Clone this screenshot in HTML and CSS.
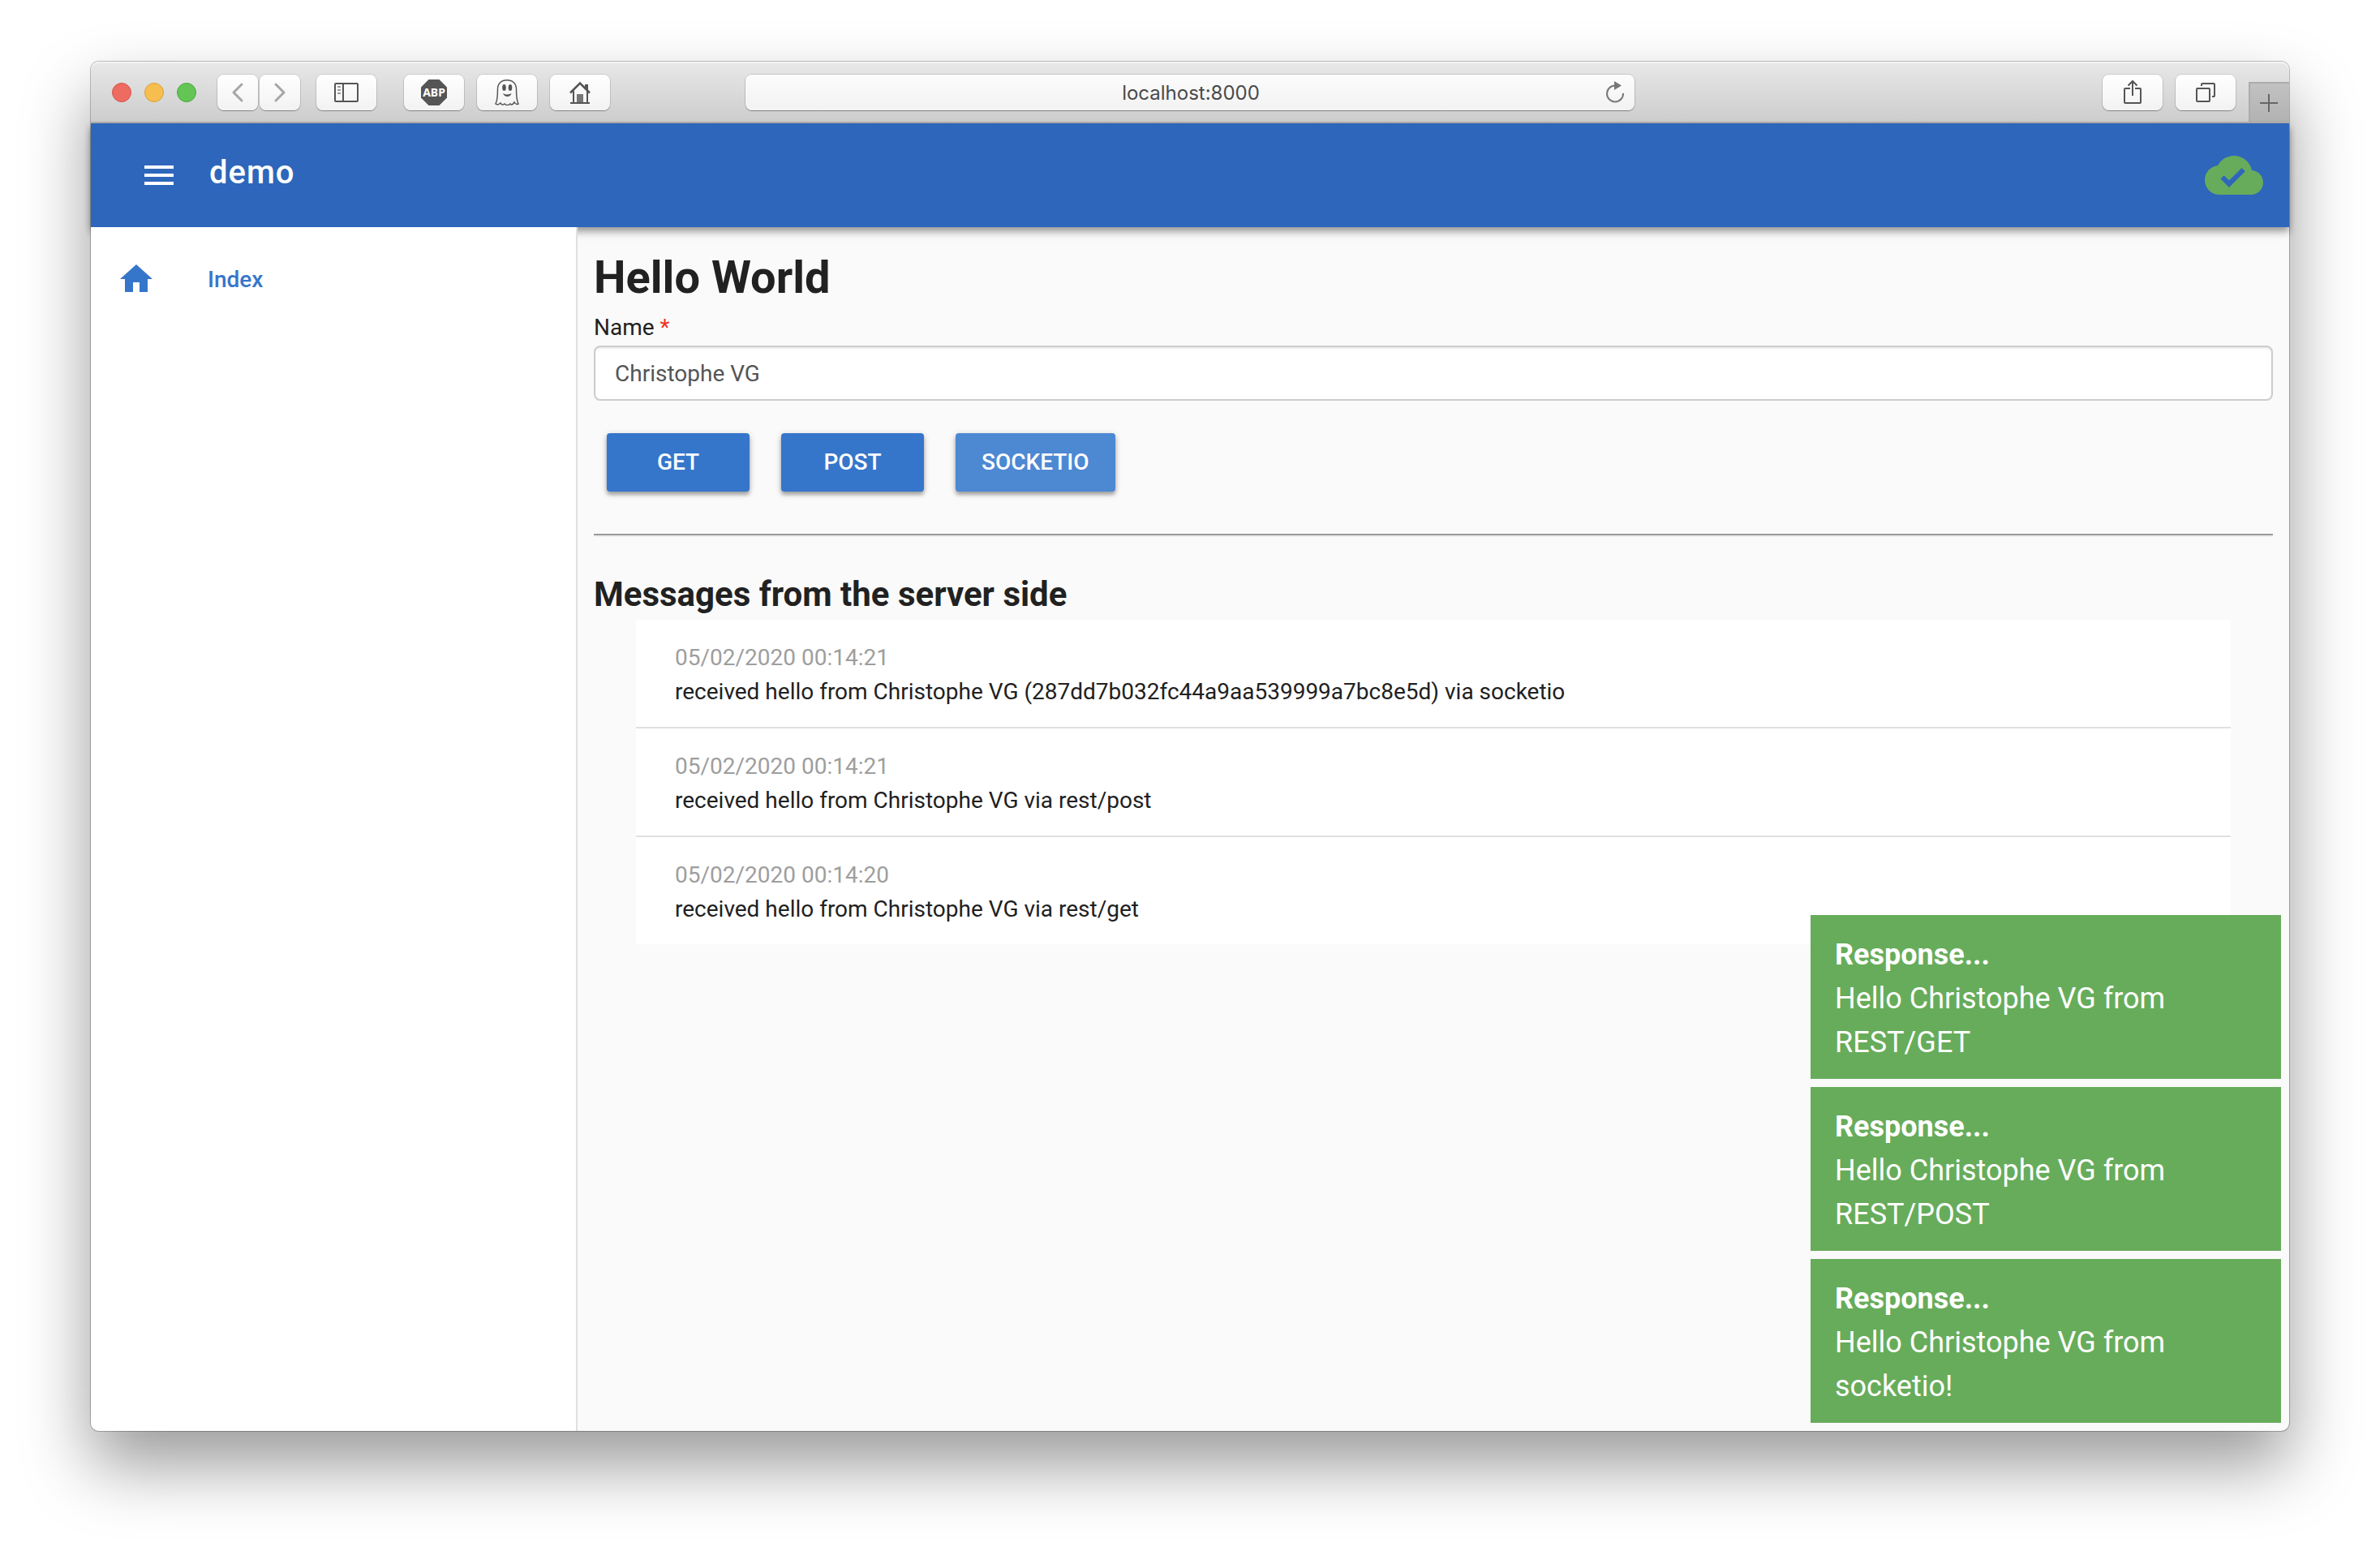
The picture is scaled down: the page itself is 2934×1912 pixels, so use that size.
FILE: index.html
```html
<!DOCTYPE html>
<html lang="en">
<head>
<meta charset="utf-8">
<title>demo</title>
<link rel="stylesheet" href="styles.css">
</head>
<body>
<div class="window">
  <header class="chrome">
    <div class="lights"><span class="light red"></span><span class="light amber"></span><span class="light green"></span></div>
    <div class="nav-pair">
      <button class="tool narrow" aria-label="Back"><svg width="50" height="44" viewBox="0 0 50 44"><path d="M30 12 20 22 30 32" fill="none" stroke="#a6a6a6" stroke-width="3" stroke-linecap="round" stroke-linejoin="round"/></svg></button>
      <button class="tool narrow" aria-label="Forward"><svg width="50" height="44" viewBox="0 0 50 44"><path d="M20 12 30 22 20 32" fill="none" stroke="#a6a6a6" stroke-width="3" stroke-linecap="round" stroke-linejoin="round"/></svg></button>
    </div>
    <button class="tool" aria-label="Sidebar"><svg width="74" height="44" viewBox="0 0 74 44" fill="none" stroke="#555" stroke-width="2"><rect x="23" y="11" width="28" height="22" rx="1"/><path d="M33 11v22"/><path d="M26 15h4M26 19h4M26 23h4" stroke="#999"/></svg></button>
    <div class="extensions">
      <button class="tool" aria-label="AdBlock Plus"><svg width="74" height="44" viewBox="0 0 74 44"><path d="M30.500 6h13l9.500 9.500v13L43.500 38h-13L21 28.500v-13z" fill="#555"/><text x="37" y="27" class="abp">ABP</text></svg></button>
      <button class="tool" aria-label="Ghostery"><svg width="74" height="44" viewBox="0 0 74 44"><path d="M25.500 18C25.500 11 30 6.700 37 6.700S48.500 11 48.500 18c0 8 0 13 2.500 18-2 1-4 0-5-2-2 3-3.500 4-5 2-2 2-5 2-7 0-2 2-4 1-5-1-2 2-3.500 3-6 1 2.500-5 2.500-10 2.500-18z" fill="none" stroke="#555" stroke-width="1.500"/><ellipse cx="33.500" cy="16" rx="2.300" ry="4" fill="#555"/><ellipse cx="41" cy="16" rx="2.300" ry="4" fill="#555"/><path d="M32 23q5 3 10.500 0-1 4-5 4T32 23z" fill="#555"/></svg></button>
      <button class="tool" aria-label="Home"><svg width="74" height="44" viewBox="0 0 74 44"><path d="M25 22.500 37 10.500 49 22.500" fill="none" stroke="#555" stroke-width="2.500"/><path d="M29 20v14M46 20v14M25 35h24" fill="none" stroke="#555" stroke-width="2"/><path d="M43 12h4v8l-4-4z" fill="#555"/><path d="M33 24h8v10h-8z" fill="#777"/></svg></button>
    </div>
    <div class="address">
      <input class="url" type="text" value="localhost:8000" aria-label="Address">
      <button class="reload" aria-label="Reload"><svg width="28" height="32" viewBox="0 0 28 32"><path d="M24 17A10 10 0 1 1 14 7.500" fill="none" stroke="#777" stroke-width="2"/><path d="M13 2l9 5.500L13 13z" fill="#777"/></svg></button>
    </div>
    <div class="right-tools">
      <button class="tool" aria-label="Share"><svg width="74" height="44" viewBox="0 0 74 44" fill="none" stroke="#555" stroke-width="2"><path d="M34 17h-6q-1 0-1 1v16q0 1 1 1h18q1 0 1-1V18q0-1-1-1h-6M37 26V8M31.500 13.500 37 8l5.500 5.500"/></svg></button>
      <button class="tool" aria-label="Tabs"><svg width="74" height="44" viewBox="0 0 74 44" fill="none" stroke="#555" stroke-width="2"><rect x="26" y="17" width="16" height="16" rx="1"/><path d="M32 14v-2q0-1 1-1h14q1 0 1 1v14q0 1-1 1h-2"/></svg></button>
    </div>
    <button class="new-tab" aria-label="New tab"><svg width="50" height="48" viewBox="0 0 50 48"><path d="M14 25h22M25 14v22" stroke="#666" stroke-width="2"/></svg></button>
  </header>
  <div class="appbar">
    <button class="icon-button" aria-label="Menu"><svg width="48" height="48" viewBox="0 0 24 24"><path fill="#fff" d="M3 18h18v-2H3v2zm0-5h18v-2H3v2zm0-7v2h18V6H3z"/></svg></button>
    <div class="app-title">demo</div>
    <svg class="cloud" width="72" height="72" viewBox="0 0 24 24"><path fill="#67ac5b" d="M19.350 10.040C18.670 6.590 15.640 4 12 4 9.110 4 6.600 5.640 5.350 8.040 2.340 8.360 0 10.910 0 14c0 3.310 2.690 6 6 6h13c2.760 0 5-2.240 5-5 0-2.640-2.050-4.780-4.650-4.960zM10 17l-3.500-3.500 1.410-1.410L10 14.170 15.180 9l1.410 1.410L10 17z"/></svg>
  </div>
  <div class="body">
    <nav class="sidebar">
      <a class="nav-item" href="#"><svg width="48" height="48" viewBox="0 0 24 24"><path fill="#3576cb" d="M10,20V14H14V20H19V12H22L12,3L2,12H5V20H10Z"/></svg><span>Index</span></a>
    </nav>
    <main class="content">
      <h1>Hello World</h1>
      <form>
        <label for="name">Name <span class="required">*</span></label>
        <input class="field" id="name" type="text" value="Christophe VG">
        <div class="actions">
          <button class="btn" type="button">GET</button>
          <button class="btn" type="button">POST</button>
          <button class="btn active" type="button">SOCKETIO</button>
        </div>
      </form>
      <hr>
      <h2>Messages from the server side</h2>
      <ul class="messages">
        <li><time>05/02/2020 00:14:21</time><p>received hello from Christophe VG (287dd7b032fc44a9aa539999a7bc8e5d) via socketio</p></li>
        <li><time>05/02/2020 00:14:21</time><p>received hello from Christophe VG via rest/post</p></li>
        <li><time>05/02/2020 00:14:20</time><p>received hello from Christophe VG via rest/get</p></li>
      </ul>
    </main>
  </div>
  <aside class="toasts">
    <div class="toast"><strong>Response...</strong><p>Hello Christophe VG from REST/GET</p></div>
    <div class="toast"><strong>Response...</strong><p>Hello Christophe VG from REST/POST</p></div>
    <div class="toast"><strong>Response...</strong><p>Hello Christophe VG from socketio!</p></div>
  </aside>
</div>
</body>
</html>
```
FILE: styles.css
```css
* { box-sizing: border-box; }
body {
  margin: 0;
  min-height: 100vh;
  padding: 76px 112px 148px;
  display: flex;
  background: #fff;
  color: #212121;
  font-family: Roboto, sans-serif;
  font-size: 28px;
}
button { border: 0; padding: 0; margin: 0; font: inherit; cursor: pointer; }
svg { display: block; }
h1, h2, p, ul { margin: 0; padding: 0; }

.window {
  position: relative;
  flex: 1;
  display: flex;
  flex-direction: column;
  border-radius: 10px;
  background: #fafafa;
  box-shadow: 0 0 0 1px rgba(0, 0, 0, .24), 0 42px 84px rgba(0, 0, 0, .4);
}

/* Browser toolbar */
.chrome {
  height: 76px;
  display: flex;
  align-items: center;
  padding: 2px 0 0 26px;
  border-radius: 10px 10px 0 0;
  border-bottom: 2px solid #b4b2af;
  background: linear-gradient(#e8e8e8, #cdcdcd);
  box-shadow: inset 0 2px #f4f4f4;
}
.lights { display: flex; gap: 16px; margin-right: 26px; }
.light { width: 24px; height: 24px; border-radius: 50%; border: 1px solid; }
.red { background: #ed6b60; border-color: #d9544a; }
.amber { background: #f5be4f; border-color: #d9a23b; }
.green { background: #62c554; border-color: #4ba93f; }
.tool {
  width: 74px;
  height: 44px;
  border-radius: 8px;
  background: linear-gradient(#fff, #f2f2f2);
  box-shadow: 0 0 0 1px rgba(0, 0, 0, .1), 0 1px 1px rgba(0, 0, 0, .3);
}
.narrow { width: 50px; }
.nav-pair { display: flex; gap: 2px; margin-right: 20px; }
.extensions { display: flex; gap: 16px; margin-left: 34px; }
.abp { font: 700 14px "Noto Sans", sans-serif; fill: #fff; text-anchor: middle; }
.address {
  flex: 0 1 1096px;
  height: 44px;
  display: flex;
  align-items: center;
  margin: 0 auto 0 167px;
  padding-right: 10px;
  border-radius: 8px;
  background: linear-gradient(#fcfcfc, #f2f2f2);
  box-shadow: 0 0 0 1px rgba(0, 0, 0, .12), 0 1px 1px rgba(0, 0, 0, .3);
}
.url {
  flex: 1;
  min-width: 0;
  padding: 0 0 0 40px;
  border: 0;
  background: none;
  text-align: center;
  color: #4a4a4a;
  font: 24px Inter, sans-serif;
}
.reload { background: none; }
.right-tools { display: flex; gap: 16px; margin-right: 16px; }
.new-tab {
  align-self: flex-end;
  width: 50px;
  height: 49px;
  background: linear-gradient(#c2c2c2, #b2b2b2);
  box-shadow: inset 2px 2px #acacac;
}

/* Application bar */
.appbar {
  position: relative;
  height: 128px;
  display: flex;
  align-items: center;
  padding: 0 32px 0 60px;
  background: #2e66bb;
  color: #fff;
  box-shadow: 0 4px 8px rgba(0, 0, 0, .3), 0 8px 10px rgba(0, 0, 0, .14);
}
.icon-button { background: none; }
.app-title {
  margin-left: 38px;
  padding-bottom: 6px;
  font-size: 40px;
  font-weight: 500;
  line-height: 60px;
  letter-spacing: 1px;
}
.cloud { margin-left: auto; }

/* Page */
.body { flex: 1; display: flex; }
.sidebar {
  position: relative;
  width: 600px;
  padding-top: 16px;
  border-right: 2px solid #e0e0e0;
  border-radius: 0 0 0 10px;
  background: #fff;
}
.nav-item {
  height: 96px;
  display: flex;
  align-items: center;
  gap: 64px;
  padding-left: 32px;
  color: #3576cb;
  font-weight: 500;
  text-decoration: none;
}
.content { flex: 1; min-width: 0; padding: 22px 20px 20px; }
h1 { font-size: 56px; line-height: 80px; }
label { display: block; line-height: 44px; }
.required { color: #ea3323; }
.field {
  width: 100%;
  height: 68px;
  display: block;
  padding: 0 24px;
  border: 2px solid #ccc;
  border-radius: 8px;
  background: #fff;
  box-shadow: inset 0 2px 2px rgba(0, 0, 0, .075);
  color: #555;
  font: inherit;
}
.actions { display: flex; gap: 39px; padding: 40px 16px 52px; }
.btn {
  min-width: 176px;
  height: 72px;
  padding: 0 32px 2px;
  border-radius: 4px;
  background: #3576cb;
  color: #fff;
  font-weight: 500;
  box-shadow: 0 4px 4px rgba(0, 0, 0, .25), 0 2px 8px rgba(0, 0, 0, .2);
}
.active { background: #4d88d3; }
hr { margin: 0; border: solid; border-width: 2px 0; border-color: #999 transparent #eee; }
h2 { margin-top: 42px; padding-bottom: 2px; font-size: 42px; line-height: 58px; }
.messages { margin: 0 52px; background: #fff; list-style: none; }
.messages li { padding: 26px 48px 22px; line-height: 42px; }
.messages li + li { border-top: 2px solid #e0e0e0; }
.messages time { display: block; color: #9e9e9e; }

/* Notifications */
.toasts {
  position: absolute;
  right: 10px;
  bottom: 10px;
  width: 580px;
  display: flex;
  flex-direction: column;
  gap: 10px;
}
.toast { padding: 22px 30px 18px; background: #67ac5b; color: #fff; font-size: 36px; line-height: 54px; }
.toast p { max-width: 460px; }
```
